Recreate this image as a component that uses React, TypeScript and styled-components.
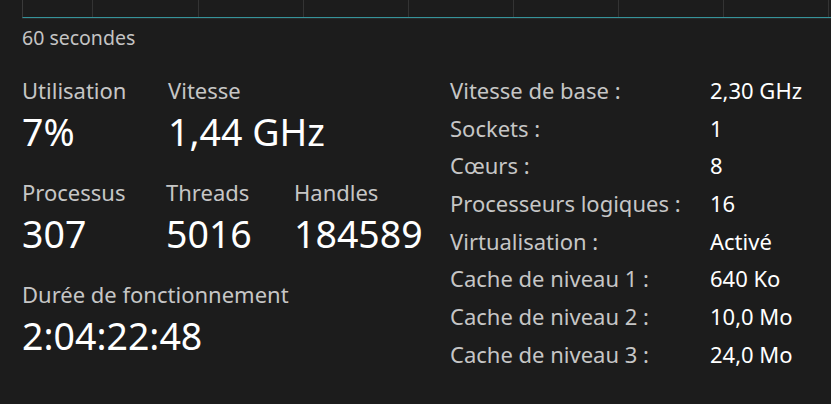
import React from "react";
import styled, { createGlobalStyle } from "styled-components";

const GlobalStyle = createGlobalStyle`
  html, body {
    margin: 0;
    padding: 0;
    background: #1c1c1c;
  }
  body {
    font-family: "Noto Sans", "Open Sans", sans-serif;
    overflow: hidden;
  }
`;

type Pair = { label: string; value: string };

const specs: Pair[] = [
  { label: "Vitesse de base :", value: "2,30 GHz" },
  { label: "Sockets :", value: "1" },
  { label: "Cœurs :", value: "8" },
  { label: "Processeurs logiques :", value: "16" },
  { label: "Virtualisation :", value: "Activé" },
  { label: "Cache de niveau 1 :", value: "640 Ko" },
  { label: "Cache de niveau 2 :", value: "10,0 Mo" },
  { label: "Cache de niveau 3 :", value: "24,0 Mo" },
];

// vertical grid lines of the history chart (page x coordinates)
const gridLines = [92, 198, 303, 408, 513, 618, 723, 828];

const App = () => {
  return (
    <Page>
      <GlobalStyle />
      <Graph>
        <svg width="100%" height="17">
          {gridLines.map((x) => (
            <line key={x} x1={x - 22.5} y1="0" x2={x - 22.5} y2="17" stroke="#333333" strokeWidth="1" />
          ))}
        </svg>
      </Graph>
      <Caption>60 secondes</Caption>

      <Body>
        <Left>
          <StatRow>
            <Stat $width={146}>
              <Label>Utilisation</Label>
              <Value>7%</Value>
            </Stat>
            <Stat>
              <Label>Vitesse</Label>
              <Value>1,44 GHz</Value>
            </Stat>
          </StatRow>
          <StatRow>
            <Stat $width={144}>
              <Label>Processus</Label>
              <Value>307</Value>
            </Stat>
            <Stat $width={128}>
              <Label>Threads</Label>
              <Value>5016</Value>
            </Stat>
            <Stat>
              <Label>Handles</Label>
              <Value>184589</Value>
            </Stat>
          </StatRow>
          <StatRow>
            <Stat>
              <Label>Durée de fonctionnement</Label>
              <Value>2:04:22:48</Value>
            </Stat>
          </StatRow>
        </Left>

        <Specs>
          {specs.map((s) => (
            <React.Fragment key={s.label}>
              <SpecLabel>{s.label}</SpecLabel>
              <SpecValue>{s.value}</SpecValue>
            </React.Fragment>
          ))}
        </Specs>
      </Body>
    </Page>
  );
};

export default App;

const Page = styled.div`
  width: 831px;
  height: 404px;
  background: #1c1c1c;
  overflow: hidden;
`;

const Graph = styled.div`
  margin-left: 22px;
  height: 17px;
  border-left: 1px solid #3a3a3a;
  border-bottom: 1px solid #35939a;
  box-shadow: 0 1px 0 #2a2a2a;

  svg {
    display: block;
  }
`;

const Caption = styled.div`
  margin: 7px 0 0 22px;
  font-size: 19.5px;
  line-height: 26px;
  color: #c4c4c4;
`;

const Body = styled.div`
  display: flex;
  padding: 24px 0 0 22px;
`;

const Left = styled.div`
  width: 428px;
  display: flex;
  flex-direction: column;
  gap: 20px;
`;

const StatRow = styled.div`
  display: flex;
`;

const Stat = styled.div<{ $width?: number }>`
  display: flex;
  flex-direction: column;
  width: ${(p) => (p.$width ? `${p.$width}px` : "auto")};
`;

const Label = styled.div`
  font-size: 22px;
  line-height: 30px;
  color: #c6c6c6;
`;

const Value = styled.div`
  margin-top: 2px;
  font-size: 37.5px;
  line-height: 50px;
  color: #ffffff;
`;

const Specs = styled.div`
  display: grid;
  grid-template-columns: 260px auto;
  grid-auto-rows: 37.7px;
  align-items: center;
  margin-top: -4px;
`;

const SpecLabel = styled.div`
  font-size: 22px;
  line-height: 30px;
  color: #c6c6c6;
  white-space: nowrap;
`;

const SpecValue = styled.div`
  font-size: 22px;
  line-height: 30px;
  color: #ffffff;
  white-space: nowrap;
`;
